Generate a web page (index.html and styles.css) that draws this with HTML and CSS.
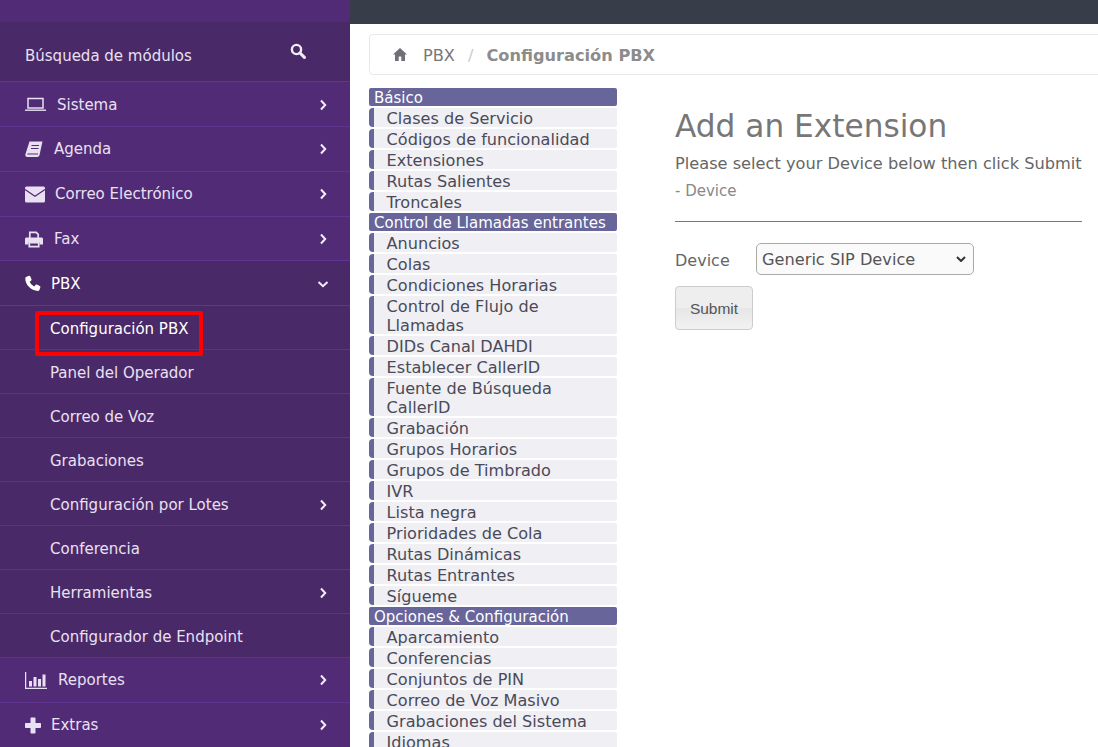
FILE: index.html
```html
<!DOCTYPE html>
<html lang="en">
<head>
  <meta charset="UTF-8" />
  <meta name="viewport" content="width=device-width, initial-scale=1.0" />
  <title>PBX - Configuración PBX</title>
  <link rel="stylesheet" href="styles.css">
</head>
<body>
  <div class="sidebar">
    <div class="search-row">
      <span>Búsqueda de módulos</span>
      <svg class="search-icon" viewBox="0 0 16 16"><circle cx="6.5" cy="6.5" r="4.6" fill="none" stroke="currentColor" stroke-width="2.4"/><path d="M10 10l4.4 4.4" stroke="currentColor" stroke-width="3" stroke-linecap="round"/></svg>
    </div>

    <a class="nav-item">
      <svg class="ico w21" viewBox="0 0 21 14"><path d="M3 1h15v9.500H3z" fill="none" stroke="currentColor" stroke-width="1.500"/><path d="M0 12h21v1.400H0z" fill="currentColor"/></svg>
      <span>Sistema</span>
      <svg class="chev" viewBox="0 0 8 12"><path d="M2 1.500L6.200 6 2 10.500"/></svg>
    </a>
    <a class="nav-item">
      <svg class="ico w18" viewBox="0 0 18 16"><path d="M4.500 0H17.500L14.500 13.500c-.3 1.300-1 2-2.500 2H2.500C.8 15.500 0 14.300.4 12.800z" fill="currentColor"/><path d="M6.500 4h7.500M6 7h7.500" stroke="#522b76" stroke-width="1.100"/><path d="M2.400 12.500h10.600" stroke="#522b76" stroke-width="1"/></svg>
      <span>Agenda</span>
      <svg class="chev" viewBox="0 0 8 12"><path d="M2 1.500L6.200 6 2 10.500"/></svg>
    </a>
    <a class="nav-item tight">
      <svg class="ico w20" viewBox="0 0 20 16"><rect width="20" height="16" rx="1.500" fill="currentColor"/><path d="M0 3l10 6.800L20 3" fill="none" stroke="#522b76" stroke-width="1.200"/></svg>
      <span>Correo Electrónico</span>
      <svg class="chev" viewBox="0 0 8 12"><path d="M2 1.500L6.200 6 2 10.500"/></svg>
    </a>
    <a class="nav-item">
      <svg class="ico w18" viewBox="0 0 18 16"><path d="M4.800 6.500V.9h6.400l2 2v3.600" fill="none" stroke="currentColor" stroke-width="1.700"/><path d="M1.500 6h15c.9 0 1.500.6 1.500 1.500V13h-3.500v-2.500h-11V13H0V7.500C0 6.600.6 6 1.500 6z" fill="currentColor"/><path d="M4.300 11.200h9.400v3.900H4.300z" fill="none" stroke="currentColor" stroke-width="1.700"/></svg>
      <span>Fax</span>
      <svg class="chev" viewBox="0 0 8 12"><path d="M2 1.500L6.200 6 2 10.500"/></svg>
    </a>
    <a class="nav-item open tight">
      <svg class="ico w16" viewBox="0 0 16 16"><path d="M1 1.500L4 .3c.5-.2 1 0 1.200.5l1.300 3c.2.400.1.800-.2 1.100L4.700 6.300c.9 2 2.500 3.700 4.600 4.700l1.400-1.700c.3-.3.700-.4 1.100-.2l3 1.300c.5.200.7.700.6 1.200l-1 3c-.2.500-.6.800-1.100.8C6 15.500 0 9.200.3 2.600c0-.5.300-.9.700-1.100z" fill="currentColor"/></svg>
      <span>PBX</span>
      <svg class="chev chev-down" viewBox="0 0 12 8"><path d="M1.500 2L6 6.200 10.500 2"/></svg>
    </a>

    <div class="sub-list">
      <a class="sub-item active">Configuración PBX<span class="highlight"></span></a>
      <a class="sub-item">Panel del Operador</a>
      <a class="sub-item">Correo de Voz</a>
      <a class="sub-item">Grabaciones</a>
      <a class="sub-item">Configuración por Lotes
        <svg class="chev" viewBox="0 0 8 12"><path d="M2 1.500L6.200 6 2 10.500"/></svg>
      </a>
      <a class="sub-item">Conferencia</a>
      <a class="sub-item">Herramientas
        <svg class="chev" viewBox="0 0 8 12"><path d="M2 1.500L6.200 6 2 10.500"/></svg>
      </a>
      <a class="sub-item">Configurador de Endpoint</a>
    </div>

    <a class="nav-item">
      <svg class="ico w22" viewBox="0 0 22 17"><path d="M.6 0v16.300H22" fill="none" stroke="currentColor" stroke-width="1.300"/><path d="M4 9h3v5.500H4zM8.500 5h3v9.500h-3zM13 7h3v7.500h-3zM17.500 2.500h3v12h-3z" fill="currentColor"/></svg>
      <span>Reportes</span>
      <svg class="chev" viewBox="0 0 8 12"><path d="M2 1.500L6.200 6 2 10.500"/></svg>
    </a>
    <a class="nav-item tight">
      <svg class="ico w16" viewBox="0 0 16 16"><path d="M5.500 1c0-.6.400-1 1-1h3c.6 0 1 .4 1 1v4.500H15c.6 0 1 .4 1 1v3c0 .6-.4 1-1 1h-4.500V15c0 .6-.4 1-1 1h-3c-.6 0-1-.4-1-1v-4.500H1c-.6 0-1-.4-1-1v-3c0-.6.400-1 1-1h4.500z" fill="currentColor"/></svg>
      <span>Extras</span>
      <svg class="chev" viewBox="0 0 8 12"><path d="M2 1.500L6.200 6 2 10.500"/></svg>
    </a>
  </div>

  <div class="main">
    <div class="topbar"></div>

    <div class="breadcrumb">
      <svg class="home" viewBox="0 0 14 13"><path d="M7 0L0 6.500h2V13h3.700V8.500h2.600V13H12V6.500h2z" fill="currentColor"/></svg>
      <span class="crumb">PBX</span>
      <span class="crumb-sep">/</span>
      <span class="crumb-current">Configuración PBX</span>
    </div>

    <div class="page">
      <div class="module-menu">
        <div class="menu-head">Básico</div>
        <a class="menu-link">Clases de Servicio</a>
        <a class="menu-link">Códigos de funcionalidad</a>
        <a class="menu-link">Extensiones</a>
        <a class="menu-link">Rutas Salientes</a>
        <a class="menu-link">Troncales</a>
        <div class="menu-head">Control de Llamadas entrantes</div>
        <a class="menu-link">Anuncios</a>
        <a class="menu-link">Colas</a>
        <a class="menu-link">Condiciones Horarias</a>
        <a class="menu-link tall">Control de Flujo de Llamadas</a>
        <a class="menu-link">DIDs Canal DAHDI</a>
        <a class="menu-link">Establecer CallerID</a>
        <a class="menu-link tall">Fuente de Búsqueda CallerID</a>
        <a class="menu-link">Grabación</a>
        <a class="menu-link">Grupos Horarios</a>
        <a class="menu-link">Grupos de Timbrado</a>
        <a class="menu-link">IVR</a>
        <a class="menu-link">Lista negra</a>
        <a class="menu-link">Prioridades de Cola</a>
        <a class="menu-link">Rutas Dinámicas</a>
        <a class="menu-link">Rutas Entrantes</a>
        <a class="menu-link">Sígueme</a>
        <div class="menu-head">Opciones &amp; Configuración</div>
        <a class="menu-link">Aparcamiento</a>
        <a class="menu-link">Conferencias</a>
        <a class="menu-link">Conjuntos de PIN</a>
        <a class="menu-link">Correo de Voz Masivo</a>
        <a class="menu-link">Grabaciones del Sistema</a>
        <a class="menu-link">Idiomas</a>
      </div>

      <div class="form-area">
        <h2>Add an Extension</h2>
        <p class="lead">Please select your Device below then click Submit</p>
        <p class="sub-lead">- Device</p>
        <hr>
        <div class="device-row">
          <label for="device">Device</label>
          <select id="device">
            <option>Generic SIP Device</option>
          </select>
        </div>
        <button>Submit</button>
      </div>
    </div>
  </div>
</body>
</html>
```

FILE: styles.css
```css
html, body {
  height: 747px;
  overflow: hidden;
}

body {
  margin: 0;
  display: flex;
  font-family: "DejaVu Sans", Verdana, sans-serif;
  background: #fff;
}

.sidebar {
  width: 350px;
  flex-shrink: 0;
  padding-top: 22px;
  background: #522b76;
  color: #e9e0f2;
  font-size: 15px;
  box-sizing: border-box;
}

.search-row {
  height: 60.2px;
  padding: 8px 44px 0 25px;
  display: flex;
  justify-content: space-between;
  align-items: center;
  background: #4a2968;
  border-bottom: 1px solid #5f3591;
  box-sizing: border-box;
}

.search-icon {
  width: 16px;
  height: 16px;
  color: #f2edf7;
  margin-bottom: 9px;
}

.nav-item {
  height: 44.8px;
  padding: 1.2px 23px 0 25px;
  display: flex;
  align-items: center;
  border-bottom: 1px solid #5f3591;
  box-sizing: border-box;
}

.nav-item span {
  margin-left: 11px;
}

.nav-item.tight span {
  margin-left: 10px;
}

.nav-item.open {
  background: #4a2968;
  color: #fff;
}

.ico {
  height: 17px;
  flex-shrink: 0;
}

.w16 { width: 16px; }
.w18 { width: 18px; }
.w20 { width: 20px; }
.w21 { width: 21px; }
.w22 { width: 22px; }

.chev {
  width: 8px;
  height: 12px;
  margin-left: auto;
  fill: none;
  stroke: #f2edf7;
  stroke-width: 2;
}

.chev-down {
  width: 12px;
  height: 8px;
  margin-right: -2px;
}

.sub-list {
  margin-bottom: -0.2px;
  background: #4a2968;
}

.sub-item {
  height: 44px;
  padding: 2px 23px 0 50px;
  display: flex;
  align-items: center;
  position: relative;
  border-bottom: 1px solid #5a3486;
  box-sizing: border-box;
}

.sub-item.active {
  color: #fff;
}

.highlight {
  position: absolute;
  left: 35px;
  top: 5px;
  width: 168px;
  height: 45px;
  border: 4px solid #f00;
  border-radius: 2px;
  box-sizing: border-box;
}

.main {
  flex: 1;
  min-width: 0;
}

.topbar {
  height: 24px;
  background: #373d49;
}

.breadcrumb {
  height: 41px;
  margin: 10px -20px 0 19px;
  padding: 2px 0 0 23px;
  display: flex;
  align-items: center;
  border: 1px solid #e8e8e8;
  border-radius: 4px;
  box-sizing: border-box;
  font-size: 16.2px;
}

.home {
  width: 14px;
  height: 13px;
  margin-bottom: 2px;
  color: #6f7078;
}

.crumb {
  margin-left: 16px;
  color: #777;
}

.crumb-sep {
  margin: 0 13px;
  color: #ccc;
}

.crumb-current {
  font-weight: bold;
  color: #8c8c8c;
}

.page {
  display: flex;
  margin: 13px 0 0 19px;
}

.module-menu {
  width: 248px;
  flex-shrink: 0;
  font-size: 16.1px;
  line-height: 19px;
}

.menu-head {
  height: 18px;
  margin-bottom: 2px;
  padding-left: 5px;
  background: #67659a;
  color: #fff;
  font-size: 15px;
  line-height: 20px;
  border-radius: 2px;
}

.menu-link {
  display: block;
  height: 19px;
  margin-bottom: 2px;
  padding: 1px 0 0 12.6px;
  background: #efeff4;
  border-left: 5px solid #67659a;
  border-radius: 4px 2px 2px 4px;
  box-sizing: border-box;
  color: #4a4a58;
}

.menu-link.tall {
  height: 38px;
}

.form-area {
  margin-left: 58px;
  width: 407px;
  color: #666;
}

h2 {
  margin: 18px 0 0;
  font-size: 31.2px;
  font-weight: normal;
  line-height: 40px;
  color: #777;
}

.lead {
  margin: 8px 0 0;
  font-size: 16.2px;
  line-height: 20px;
  white-space: nowrap;
}

.sub-lead {
  margin: 7px 0 0;
  font-size: 15px;
  line-height: 20px;
  color: #888;
}

hr {
  margin: 20px 0 0;
  border: 0;
  border-top: 1px solid #777;
}

.device-row {
  display: flex;
  align-items: center;
  margin-top: 21px;
}

label {
  width: 81px;
  padding-top: 2px;
  font-size: 16px;
}

select {
  width: 218px;
  height: 32px;
  padding: 0 5px;
  font-family: inherit;
  font-size: 16.2px;
  color: #555;
  appearance: none;
  background: #fafafa url("data:image/svg+xml,%3Csvg xmlns='http://www.w3.org/2000/svg' width='10' height='6'%3E%3Cpath d='M1 1l4 4 4-4' fill='none' stroke='%23333' stroke-width='2'/%3E%3C/svg%3E") no-repeat right 7px center;
  border: 1px solid #aaa;
  border-radius: 5px;
}

button {
  display: block;
  width: 78px;
  height: 44px;
  margin-top: 11px;
  padding: 2px 0 0;
  font-family: "Liberation Sans", Arial, sans-serif;
  font-size: 15.5px;
  color: #555;
  background: linear-gradient(#eee 50%, #e6e6e6 50%, #f2f2f2);
  border: 1px solid #ccc;
  border-radius: 4px;
}
```
